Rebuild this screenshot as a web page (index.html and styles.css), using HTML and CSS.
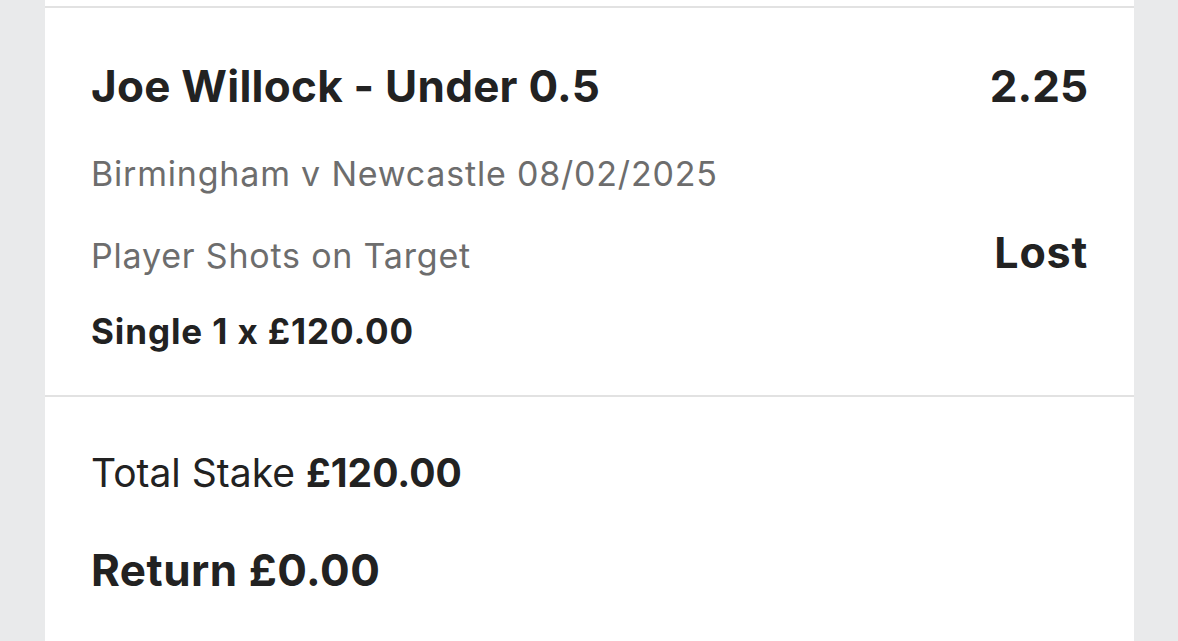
FILE: index.html
```html
<!DOCTYPE html>
<html lang="en">
<head>
  <meta charset="UTF-8" />
  <title>Bet Receipt</title>
  <link rel="stylesheet" href="styles.css">
</head>
<body>
  <div class="slip">
    <div class="prev-card"></div>

    <!-- selection -->
    <div class="leg">
      <div class="row title-row">
        <span class="selection">Joe Willock - Under 0.5</span>
        <span class="odds">2.25</span>
      </div>
      <div class="event">Birmingham v Newcastle 08/02/2025</div>
      <div class="row market-row">
        <span class="market">Player Shots on Target</span>
        <span class="result">Lost</span>
      </div>
      <div class="bet-type">Single 1 x £120.00</div>
    </div>

    <!-- totals -->
    <div class="summary">
      <div class="stake">Total Stake <b>£120.00</b></div>
      <div class="return">Return £0.00</div>
    </div>
  </div>
</body>
</html>
```

FILE: styles.css
```css
body {
  margin: 0;
  padding: 0;
  height: 100vh;
  overflow: hidden;
  background-color: #e9eaeb;
  color: #222222;
  font-family: Inter, "Liberation Sans", sans-serif;
}

.slip {
  margin: 0 44px 0 45px;
  background: white;
  min-height: 100vh;
}

.prev-card {
  height: 6px;
  border-bottom: 2px solid #e2e2e2;
}

.leg {
  padding: 52px 46px 44px 46px;
  border-bottom: 2px solid #e2e2e2;
}

.row {
  display: flex;
  justify-content: space-between;
  align-items: baseline;
}

.selection,
.odds {
  font-size: 44px;
  line-height: 52px;
  font-weight: bold;
}

.selection {
  letter-spacing: 0.25px;
}

.event {
  margin-top: 42px;
  font-size: 34px;
  line-height: 40px;
  letter-spacing: 0.8px;
  color: #6d6d6d;
}

.market-row {
  margin-top: 38px;
  height: 40px;
}

.market {
  font-size: 34px;
  line-height: 40px;
  letter-spacing: 0.8px;
  color: #6d6d6d;
}

.result {
  font-size: 43px;
  line-height: 40px;
  letter-spacing: 0.8px;
  font-weight: bold;
}

.bet-type {
  margin-top: 39px;
  font-size: 35px;
  line-height: 40px;
  letter-spacing: 0.9px;
  font-weight: bold;
}

.summary {
  padding: 52px 46px 50px 46px;
}

.stake {
  font-size: 39px;
  line-height: 48px;
}

.return {
  margin-top: 48px;
  font-size: 44px;
  line-height: 50px;
  letter-spacing: 0.5px;
  font-weight: bold;
}
```
